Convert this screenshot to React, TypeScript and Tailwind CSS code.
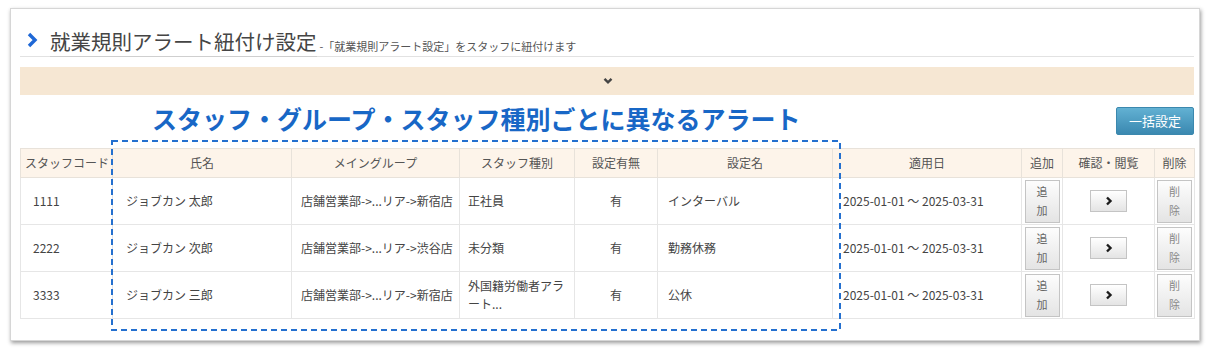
import React from "react";

const rows = [
  { code: "1111", name: "ジョブカン 太郎", group: "店舗営業部->...リア->新宿店", type: "正社員", has: "有", setting: "インターバル" },
  { code: "2222", name: "ジョブカン 次郎", group: "店舗営業部->...リア->渋谷店", type: "未分類", has: "有", setting: "勤務休務" },
  { code: "3333", name: "ジョブカン 三郎", group: "店舗営業部->...リア->新宿店", type: "外国籍労働者アラート...", has: "有", setting: "公休" },
];

const cols = [92, 179, 168, 115, 83, 175, 189, 41, 92, 40];

function SmallBtn({ a, b, color }: { a: string; b: string; color: string }) {
  return (
    <div
      className={`mx-auto w-[35px] h-[43px] flex flex-col items-center justify-center border border-[#c4c4c4] bg-gradient-to-b from-[#fdfdfd] to-[#e4e4e4] text-[11px] leading-[19px] ${color}`}
    >
      <span>{a}</span>
      <span>{b}</span>
    </div>
  );
}

export default function App() {
  return (
    <div
      className="w-[1208px] h-[354px] bg-white overflow-hidden pt-[8px]"
      style={{ fontFamily: '"Noto Sans CJK JP", "Noto Sans", sans-serif' }}
    >
      <div className="relative ml-[10px] w-[1190px] h-[333px] bg-white border border-[#d6d6d6] shadow-[1px_2px_4px_rgba(0,0,0,0.4)] pl-[9px] pr-[5px] pt-[18px]">
        {/* title row */}
        <div className="flex items-end h-[30px] border-b border-[#e2e2e2]">
          <svg width="12" height="16" viewBox="0 0 12 16" className="ml-[6px] mb-[8px] mr-[12px]">
            <path d="M3 2 L9 8 L3 14" fill="none" stroke="#1f68d6" strokeWidth="3.4" strokeLinejoin="miter" />
          </svg>
          <span className="text-[20.5px] leading-[29px] text-[#454545] border-b border-[#cfcfcf] -mb-px">
            就業規則アラート紐付け設定
          </span>
          <span className="text-[11px] leading-[20px] text-[#555] ml-[3px]">-「就業規則アラート設定」をスタッフに紐付けます</span>
        </div>

        {/* band */}
        <div className="mt-[10px] h-[28px] bg-[#f6e7d3] flex items-center justify-center">
          <svg width="10" height="8" viewBox="0 0 10 8" className="ml-[2px]">
            <path d="M1.5 1.8 L5 5.3 L8.5 1.8" fill="none" stroke="#444" strokeWidth="2.4" />
          </svg>
        </div>

        {/* heading row */}
        <div className="h-[53px] flex items-start justify-between pt-[8px]">
          <div className="ml-[132px] text-[25px] leading-[30px] font-bold text-[#1867c6]">
            スタッフ・グループ・スタッフ種別ごとに異なるアラート
          </div>
          <div className="mt-[4px] w-[78px] h-[28px] flex items-center justify-center rounded-[2px] border border-[#3b88ae] bg-gradient-to-b from-[#62b1d3] to-[#3a88b0] text-white text-[13px]">
            一括設定
          </div>
        </div>

        {/* table */}
        <table className="table-fixed border-collapse w-[1174px] text-[12px] text-[#444]">
          <colgroup>
            {cols.map((w, i) => (
              <col key={i} style={{ width: w }} />
            ))}
          </colgroup>
          <thead>
            <tr className="h-[29px] bg-[#fdf4ea] text-[#555]">
              <th className="border border-[#e8e2da] font-normal text-left pl-[4px] whitespace-nowrap overflow-hidden">スタッフコード</th>
              <th className="border border-[#e8e2da] font-normal">氏名</th>
              <th className="border border-[#e8e2da] font-normal">メイングループ</th>
              <th className="border border-[#e8e2da] font-normal">スタッフ種別</th>
              <th className="border border-[#e8e2da] font-normal">設定有無</th>
              <th className="border border-[#e8e2da] font-normal">設定名</th>
              <th className="border border-[#e8e2da] font-normal">適用日</th>
              <th className="border border-[#e8e2da] font-normal">追加</th>
              <th className="border border-[#e8e2da] font-normal">確認・閲覧</th>
              <th className="border border-[#e8e2da] font-normal">削除</th>
            </tr>
          </thead>
          <tbody>
            {rows.map((r) => (
              <tr key={r.code} className="h-[47px]">
                <td className="border border-[#e6e6e6] pl-[12px]">{r.code}</td>
                <td className="border border-[#e6e6e6] pl-[13px] whitespace-nowrap">{r.name}</td>
                <td className="border border-[#e6e6e6] pl-[9px] whitespace-nowrap overflow-hidden">{r.group}</td>
                <td className="border border-[#e6e6e6] pl-[8px] pr-[6px] leading-[18px]">{r.type}</td>
                <td className="border border-[#e6e6e6] text-center">{r.has}</td>
                <td className="border border-[#e6e6e6] pl-[10px]">{r.setting}</td>
                <td className="border border-[#e6e6e6] pl-[10px] whitespace-nowrap">2025-01-01 〜 2025-03-31</td>
                <td className="border border-[#e6e6e6] px-0">
                  <SmallBtn a="追" b="加" color="text-[#666]" />
                </td>
                <td className="border border-[#e6e6e6]">
                  <div className="mx-auto w-[37px] h-[22px] flex items-center justify-center border border-[#c4c4c4] bg-gradient-to-b from-[#ffffff] to-[#e4e4e4]">
                    <svg width="8" height="10" viewBox="0 0 8 10">
                      <path d="M2 1.5 L5.5 5 L2 8.5" fill="none" stroke="#1c1c1c" strokeWidth="2.4" />
                    </svg>
                  </div>
                </td>
                <td className="border border-[#e6e6e6] px-0">
                  <SmallBtn a="削" b="除" color="text-[#888]" />
                </td>
              </tr>
            ))}
          </tbody>
        </table>

        {/* dashed highlight */}
        <svg className="absolute left-[100px] top-[131px] pointer-events-none" width="730" height="191" viewBox="0 0 730 191">
          <rect x="1" y="1" width="728" height="189" fill="none" stroke="#2470cf" strokeWidth="2" strokeDasharray="6 4" />
        </svg>
      </div>
    </div>
  );
}
